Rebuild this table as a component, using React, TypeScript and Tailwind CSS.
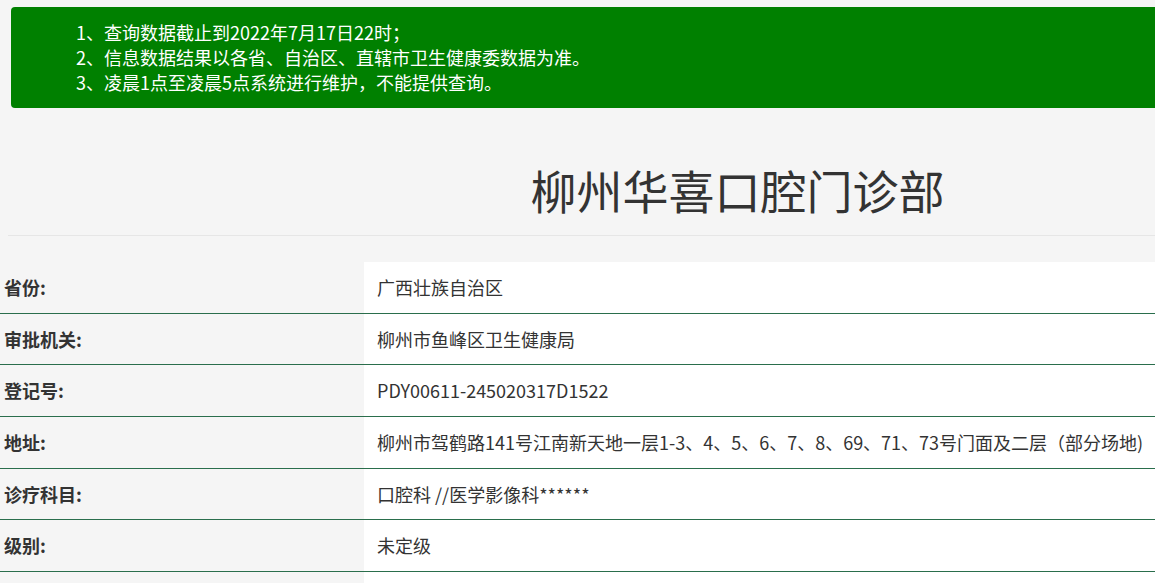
const NOTICES = [
  "1、查询数据截止到2022年7月17日22时；",
  "2、信息数据结果以各省、自治区、直辖市卫生健康委数据为准。",
  "3、凌晨1点至凌晨5点系统进行维护，不能提供查询。",
];

const ROWS: [string, string][] = [
  ["省份:", "广西壮族自治区"],
  ["审批机关:", "柳州市鱼峰区卫生健康局"],
  ["登记号:", "PDY00611-245020317D1522"],
  ["地址:", "柳州市驾鹤路141号江南新天地一层1-3、4、5、6、7、8、69、71、73号门面及二层（部分场地)"],
  ["诊疗科目:", "口腔科 //医学影像科******"],
  ["级别:", "未定级"],
  ["", ""],
];

export default function App() {
  return (
    <div
      className="h-[583px] w-[1155px] overflow-hidden bg-[#f5f5f5] text-[#333]"
      style={{ fontFamily: '"Noto Sans CJK SC", "Noto Sans", sans-serif' }}
    >
      {/* 提示框 */}
      <div className="pl-[11px] pt-[7px]">
        <div className="h-[101px] w-[1160px] rounded-l-[4px] bg-[#008000] pl-[65px] pt-[13px] text-[18px] leading-[25px] text-white">
          {NOTICES.map((n) => (
            <div key={n}>{n}</div>
          ))}
        </div>
      </div>

      {/* 标题 */}
      <div className="flex h-[127px] justify-center pl-[320px] pt-[51px]">
        <h1 className="text-[46px] font-normal leading-[60px] text-[#333]">
          柳州华喜口腔门诊部
        </h1>
      </div>
      <div className="ml-[8px] h-px bg-[#e6e6e6]" />

      {/* 详情表 */}
      <div className="mt-[26px]">
        {ROWS.map(([label, value], i) => (
          <div key={i} className="flex h-[51.7px] border-b border-[#2a6e4c]">
            <div className="flex w-[364px] items-center pl-[4px] text-[18px] font-bold text-[#333]">
              {label}
            </div>
            <div className="flex flex-1 items-center whitespace-nowrap bg-white pl-[13px] text-[18px] text-[#333]">
              {value}
            </div>
          </div>
        ))}
      </div>
    </div>
  );
}
